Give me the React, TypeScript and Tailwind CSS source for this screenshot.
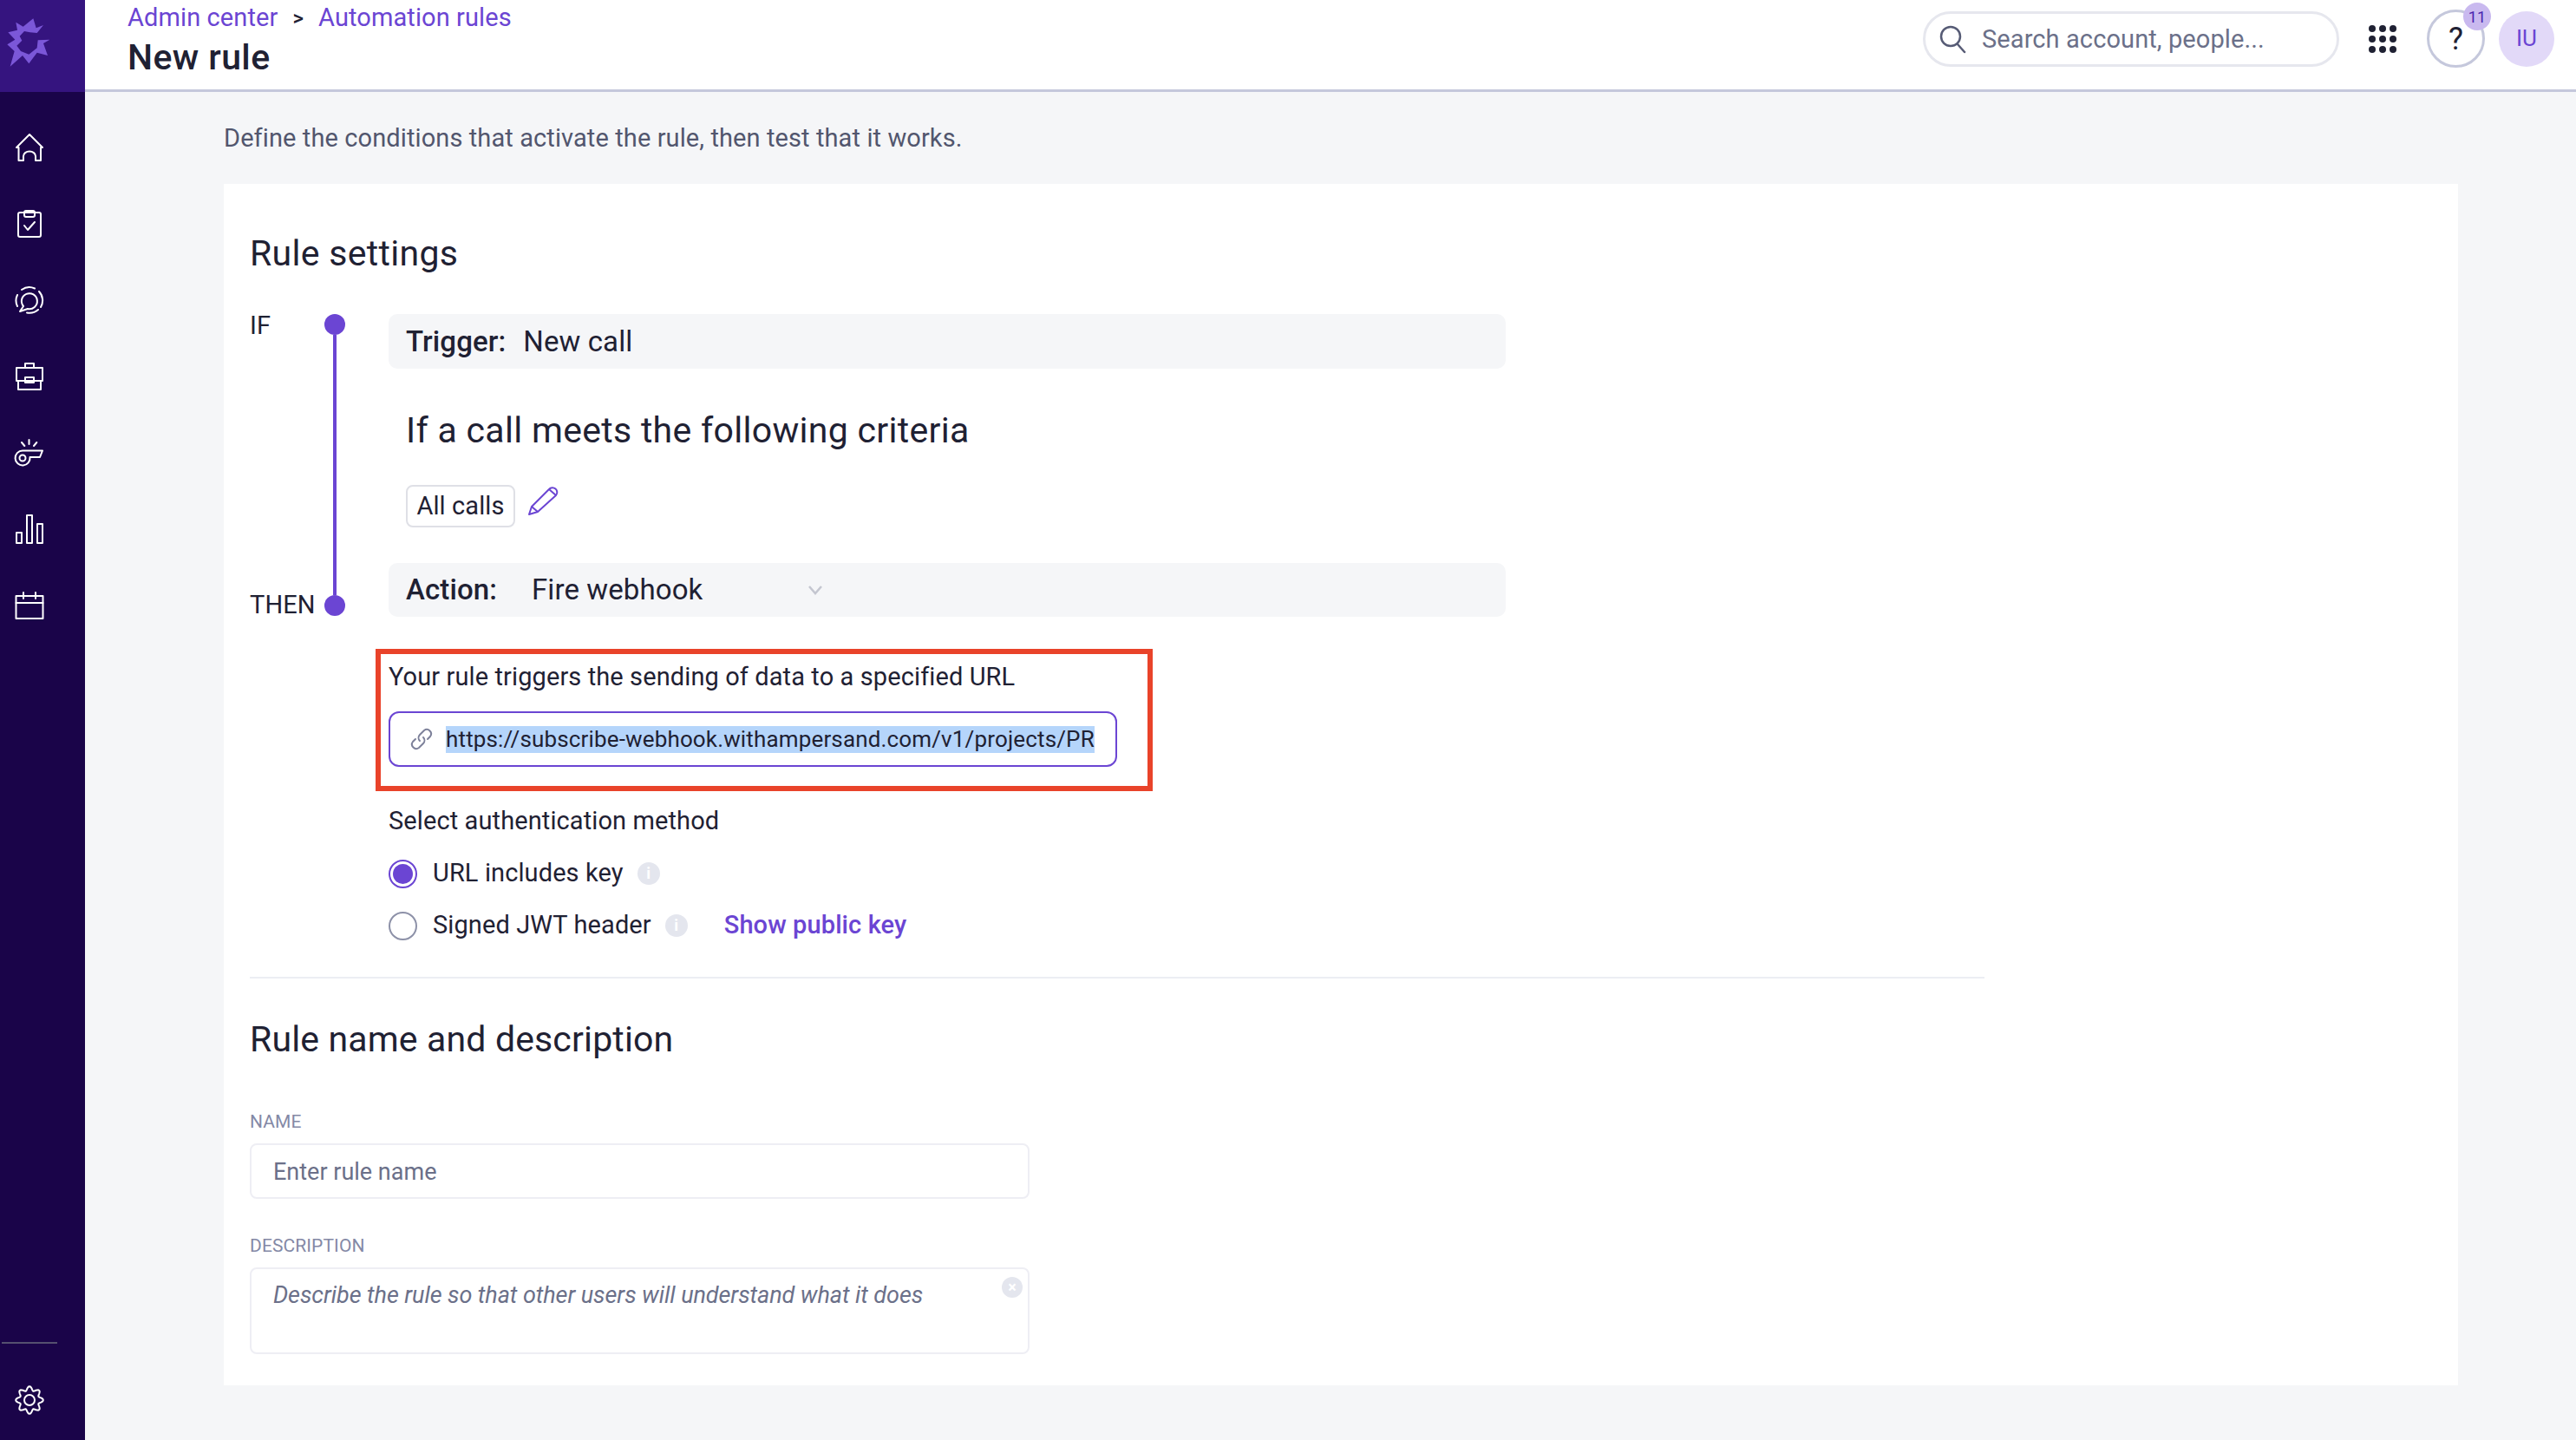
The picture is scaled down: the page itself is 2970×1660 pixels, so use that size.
const purple = "#6b45d3";

function Icon({ children, size = 36 }: { children: React.ReactNode; size?: number }) {
  return (
    <svg width={size} height={size} viewBox="0 0 36 36" fill="none" stroke="currentColor" strokeWidth="2" strokeLinecap="round" strokeLinejoin="round">
      {children}
    </svg>
  );
}

// wavy outline for the settings cog, 8 lobes
const gearPath =
  Array.from({ length: 96 }, (_, i) => {
    const a = (i / 96) * Math.PI * 2;
    const r = 13.5 + 2.3 * Math.cos(8 * a);
    return `${i === 0 ? "M" : "L"}${(18 + r * Math.sin(a)).toFixed(2)} ${(18 - r * Math.cos(a)).toFixed(2)}`;
  }).join(" ") + " Z";

const navIcons = [
  <path key="home" d="M18 3 3 18h2.5v15H11v-5a7 5.5 0 0 1 14 0v5h6V18h2Z" />,
  <g key="tasks"><rect x="5" y="5" width="26" height="28" rx="2" /><rect x="12" y="3" width="12" height="7" rx="2" /><path d="m12 20 4 5 8-9" /></g>,
  <g key="chat">
    <path d="M11 25a9 9 0 1 1 5 3l-9 3Z" />
    <path d="M9 6A15 15 0 0 1 24 4.5M4 12a15 15 0 0 0 0 13M29 8a15 15 0 0 1 2 18M15 32.5A15 15 0 0 0 28 29" />
  </g>,
  <g key="case"><rect x="3" y="8" width="30" height="15" /><path d="M5 23v10h26V23M13 8V3h10v5" /><rect x="13" y="19" width="10" height="6" /></g>,
  <g key="whistle"><path d="M10 15.5h23L30 23H18.5A8.5 8.5 0 1 1 10 15.5Z" /><circle cx="10" cy="24" r="3.5" /><path d="M17.5 3v5M9 6l3.3 4M26.3 6 23 10" /></g>,
  <g key="chart"><rect x="3" y="22" width="6" height="12" /><rect x="15" y="2" width="6" height="32" /><rect x="27" y="12" width="6" height="22" /></g>,
  <g key="calendar"><rect x="2.5" y="7" width="31" height="26" /><path d="M2.5 15h31M11 3v7M25 3v7" /></g>,
];

function Logo() {
  return (
    <svg width="70" height="70" viewBox="0 0 210 210" fill="#7b57d8">
      <path d="M55 35 80 50 115 22 125 55 150 45 128 72 104 70 84 66 68 83 76 98 58 116 72 135 100 146 128 124 131 97 172 95 150 108 165 150 128 140 100 178 78 150 35 188 50 135 25 112 52 95 28 70 60 62Z" />
    </svg>
  );
}

function Info() {
  return (
    <span className="flex h-[26px] w-[26px] items-center justify-center rounded-full bg-[#e4e6ee] text-[18px] font-bold leading-none text-white">i</span>
  );
}

function Radio({ checked }: { checked?: boolean }) {
  return (
    <span className={`flex h-[33px] w-[33px] items-center justify-center rounded-full border-2 ${checked ? "border-[#6b45d3]" : "border-[#8d91a8]"}`}>
      {checked && <span className="h-[23px] w-[23px] rounded-full bg-[#6b45d3]" />}
    </span>
  );
}

export default function App() {
  return (
    <div className="flex h-[1660px] w-[2970px] overflow-hidden bg-[#f5f6f8] text-[29px] tracking-[0.1px] text-[#1f2133] [font-family:Roboto,sans-serif]">
      <aside className="flex w-[98px] shrink-0 flex-col bg-[#1a0449] text-white">
        <div className="h-[106px] bg-[#35147f] pt-[14px]">
          <Logo />
        </div>
        <nav className="flex flex-col items-start gap-[52px] pl-[16px] pt-[46px]">
          {navIcons.map((icon, i) => (
            <Icon key={i}>{icon}</Icon>
          ))}
        </nav>
        <div className="mt-auto flex flex-col items-start pb-[28px]">
          <div className="ml-[2px] h-[2px] w-[64px] bg-[#55506f]" />
          <div className="ml-[16px] mt-[47px]">
            <Icon>
              <circle cx="18" cy="18" r="6" />
              <path d={gearPath} />
            </Icon>
          </div>
        </div>
      </aside>

      <div className="flex min-w-0 flex-1 flex-col">
        <header className="flex h-[106px] shrink-0 items-start border-b-[3px] border-[#c5c8dc] bg-white pl-[49px] pr-[25px]">
          <div className="flex flex-col">
            <div className="flex h-[42px] items-center text-[#6b45d3]">
              <span>Admin center</span>
              <span className="mx-[17px] text-[24px] font-medium text-[#1f2133]">&gt;</span>
              <span>Automation rules</span>
            </div>
            <h1 className="text-[41px] font-medium leading-[49px] tracking-[0.4px]">New rule</h1>
          </div>
          <div className="ml-auto flex items-center pt-[11px]">
            <div className="flex h-[64px] w-[480px] items-center gap-[18px] rounded-full border-[3px] border-[#e6e7ee] pl-[15px] text-[#6b7089]">
              <svg width="32" height="34" viewBox="0 0 32 34" fill="none" stroke="#565b75" strokeWidth="2.5" strokeLinecap="round">
                <circle cx="14" cy="14" r="11" />
                <path d="m22 23 8 9" />
              </svg>
              <span className="pt-[2px]">Search account, people...</span>
            </div>
            <div className="ml-[34px] grid grid-cols-3 gap-[4px]">
              {Array.from({ length: 9 }).map((_, i) => (
                <span key={i} className="h-[8px] w-[8px] rounded-full bg-[#1f2133]" />
              ))}
            </div>
            <div className="relative ml-[35px] flex h-[67px] w-[67px] items-center justify-center rounded-full border-[3px] border-[#c5c8dc] text-[36px]">
              ?
              <span className="absolute -right-[10px] -top-[11px] flex h-[32px] w-[32px] items-center justify-center rounded-full bg-[#c9b9ef] text-[18px] text-[#4a25b0]">11</span>
            </div>
            <div className="ml-[16px] flex h-[64px] w-[64px] items-center justify-center rounded-full bg-[#e2d9f8] text-[26px] text-[#6b45d3]">IU</div>
          </div>
        </header>

        <main className="flex-1 pl-[160px] pr-[136px]">
          <p className="flex h-[106px] items-center pt-[2px] text-[#52566e]">Define the conditions that activate the rule, then test that it works.</p>
          <section className="h-[1385px] bg-white px-[30px] pt-[51px]">
            <h2 className="text-[41px] leading-[58px] tracking-[0.3px]">Rule settings</h2>

            <div className="mt-[41px] flex">
              <div className="flex h-[348px] w-[76px] flex-col justify-between">
                <span className="leading-[26px]">IF</span>
                <span className="leading-[26px]">THEN</span>
              </div>
              <div className="flex h-[348px] w-[84px] flex-col items-center pr-[40px]">
                <span className="h-[24px] w-[24px] shrink-0 rounded-full bg-[#6b45d3]" />
                <span className="w-[4px] flex-1 bg-[#6b45d3]" />
                <span className="h-[24px] w-[24px] shrink-0 rounded-full bg-[#6b45d3]" />
              </div>
              <div className="w-[1288px]">
                <div className="flex h-[63px] items-center rounded-[10px] bg-[#f5f6f8] pl-[20px] text-[33px]">
                  <strong className="font-medium">Trigger:</strong>
                  <span className="ml-[20px]">New call</span>
                </div>
                <h3 className="mb-0 ml-[20px] mt-[42px] text-[41px] leading-[58px] tracking-[0.3px]">If a call meets the following criteria</h3>
                <div className="ml-[20px] mt-[34px] flex items-start gap-[6px]">
                  <span className="flex h-[49px] w-[126px] items-center justify-center rounded-[8px] border-2 border-[#dfe0e6]">All calls</span>
                  <svg className="-mt-[8px]" width="50" height="50" viewBox="0 0 50 50" fill="none" stroke={purple} strokeWidth="2" strokeLinejoin="round">
                    <path d="M10 42l3-9L33 13a5 5 0 0 1 8 7L20 39ZM13 33l7 6M33 13l8 7" />
                  </svg>
                </div>
                <div className="mt-[41px] flex h-[62px] items-center rounded-[10px] bg-[#f5f6f8] pl-[20px] text-[33px]">
                  <strong className="w-[145px] font-medium">Action:</strong>
                  <span className="w-[318px]">Fire webhook</span>
                  <svg width="18" height="12" viewBox="0 0 18 12" fill="none" stroke="#c4c6d0" strokeWidth="2.5"><path d="m2 2 7 8 7-8" /></svg>
                </div>
              </div>
            </div>

            <div className="relative ml-[145px] mt-[37px] w-[896px] border-[6px] border-[#e9432a] pb-[22px] pl-[9px] pt-[6px]">
              <p className="leading-[40px]">Your rule triggers the sending of data to a specified URL</p>
              <div className="mt-[20px] flex h-[64px] w-[840px] items-center rounded-[12px] border-2 border-[#6b45d3] pl-[21px]">
                <svg width="30" height="30" viewBox="0 0 30 30" fill="none" stroke="#7d819a" strokeWidth="2" strokeLinecap="round">
                  <path d="M13 17a5 5 0 0 1 0-7l5-5a5 5 0 0 1 7 7l-3 3" />
                  <path d="M17 13a5 5 0 0 1 0 7l-5 5a5 5 0 0 1-7-7l3-3" />
                </svg>
                <span className="ml-[13px] whitespace-nowrap bg-[#b5d5fb] text-[26px] leading-[31px] tracking-[0.15px]">https://subscribe-webhook.withampersand.com/v1/projects/PR</span>
              </div>
            </div>

            <div className="ml-[160px] mt-[15px]">
              <p className="leading-[38px]">Select authentication method</p>
              <div className="mt-[24px] flex h-[36px] items-center">
                <Radio checked />
                <span className="ml-[18px] mr-[16px]">URL includes key</span>
                <Info />
              </div>
              <div className="mt-[24px] flex h-[36px] items-center">
                <Radio />
                <span className="ml-[18px] mr-[16px]">Signed JWT header</span>
                <Info />
                <span className="ml-[42px] font-medium text-[#6b45d3]">Show public key</span>
              </div>
            </div>

            <div className="mt-[41px] h-[2px] w-[2000px] bg-[#eceef3]" />

            <h2 className="mt-[41px] text-[41px] leading-[58px] tracking-[0.15px]">Rule name and description</h2>

            <div className="mt-[52px] w-[899px]">
              <label className="block text-[21px] leading-[28px] text-[#8489a6]">NAME</label>
              <div className="mt-[11px] flex h-[64px] items-center rounded-[8px] border-2 border-[#eeeef4] pl-[25px] text-[27px] tracking-normal text-[#6b7089]"><span className="pt-[2px]">Enter rule name</span></div>
              <label className="mt-[40px] block text-[21px] leading-[28px] text-[#8489a6]">DESCRIPTION</label>
              <div className="relative mt-[11px] h-[100px] rounded-[8px] border-2 border-[#eeeef4] pl-[25px] pt-[10px] text-[27px] italic tracking-[-0.08px] text-[#6b7089]">
                Describe the rule so that other users will understand what it does
                <span className="absolute right-[6px] top-[9px] flex h-[24px] w-[24px] items-center justify-center rounded-full bg-[#e4e6ee] text-[18px] font-bold not-italic leading-none text-white">×</span>
              </div>
            </div>
          </section>
        </main>
      </div>
    </div>
  );
}
